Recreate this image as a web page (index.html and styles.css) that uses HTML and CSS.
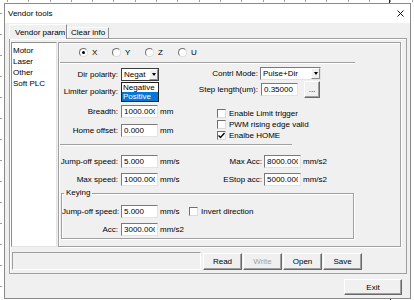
FILE: index.html
```html
<!DOCTYPE html>
<html lang="en">
<head>
    <meta charset="UTF-8">
    <meta name="viewport" content="width=device-width, initial-scale=1.0">
    <title>Vendor tools</title>
    <link rel="stylesheet" href="styles.css">
</head>
<body>

<div class="window">
    <div class="titlebar">
        <span class="title">Vendor tools</span>
        <svg class="close" width="7" height="7" viewBox="0 0 7 7">
            <path d="M0.5 0.5 L6.5 6.5 M6.5 0.5 L0.5 6.5" stroke="#111" stroke-width="1"/>
        </svg>
    </div>

    <div class="client">
        <div class="tabs">
            <div class="tab active">Vendor param</div>
            <div class="tab">Clear info</div>
        </div>

        <div class="tabpane">
            <div class="main">
                <ul class="listbox">
                    <li>Motor</li>
                    <li>Laser</li>
                    <li>Other</li>
                    <li>Soft PLC</li>
                </ul>

                <div class="panel">
                    <div class="axes">
                        <label class="radio on"><span class="dot"></span>X</label>
                        <label class="radio"><span class="dot"></span>Y</label>
                        <label class="radio"><span class="dot"></span>Z</label>
                        <label class="radio"><span class="dot"></span>U</label>
                    </div>
                    <div class="sep long"></div>

                    <div class="block1">
                        <div class="col-left">
                            <div class="field">
                                <span class="lbl">Dir polarity:</span>
                                <div class="combo open">
                                    <span>Negat</span><span class="drop"></span>
                                    <!-- list is dropped open over the next combo -->
                                    <ul class="droplist">
                                        <li>Negative</li>
                                        <li class="sel">Positive</li>
                                    </ul>
                                </div>
                            </div>
                            <div class="field">
                                <span class="lbl">Limiter polarity:</span>
                                <div class="combo"><span class="drop"></span></div>
                            </div>
                            <div class="field">
                                <span class="lbl">Breadth:</span>
                                <input class="txt" type="text" value="1000.000">
                                <span class="unit">mm</span>
                            </div>
                            <div class="field">
                                <span class="lbl">Home offset:</span>
                                <input class="txt" type="text" value="0.000">
                                <span class="unit">mm</span>
                            </div>
                        </div>

                        <div class="col-right">
                            <div class="field mode-row">
                                <span class="lbl">Contrl Mode:</span>
                                <div class="combo wide"><span>Pulse+Dir</span><span class="drop"></span></div>
                            </div>
                            <div class="field step-row">
                                <span class="lbl">Step length(um):</span>
                                <input class="txt" type="text" value="0.35000">
                                <button class="btn more">...</button>
                            </div>
                            <div class="checks">
                                <label class="check"><span class="box"></span>Enable Limit trigger</label>
                                <label class="check"><span class="box"></span>PWM rising edge valid</label>
                                <label class="check"><span class="box on">
                                    <svg width="7" height="7" viewBox="0 0 7 7"><path d="M0.5 3.5 L2.5 5.5 L6.5 1" fill="none" stroke="#000" stroke-width="1.3"/></svg>
                                </span>Enalbe HOME</label>
                            </div>
                        </div>
                    </div>

                    <div class="sep short"></div>

                    <div class="block2">
                        <div class="row">
                            <div class="field left-field">
                                <span class="lbl">Jump-off speed:</span>
                                <input class="txt" type="text" value="5.000">
                                <span class="unit">mm/s</span>
                            </div>
                            <div class="field right-field">
                                <span class="lbl">Max Acc:</span>
                                <input class="txt" type="text" value="8000.000">
                                <span class="unit">mm/s2</span>
                            </div>
                        </div>
                        <div class="row">
                            <div class="field left-field">
                                <span class="lbl">Max speed:</span>
                                <input class="txt" type="text" value="1000.000">
                                <span class="unit">mm/s</span>
                            </div>
                            <div class="field right-field">
                                <span class="lbl">EStop acc:</span>
                                <input class="txt" type="text" value="5000.000">
                                <span class="unit">mm/s2</span>
                            </div>
                        </div>
                    </div>

                    <fieldset class="group">
                        <legend>Keying</legend>
                        <div class="row">
                            <div class="field left-field">
                                <span class="lbl">Jump-off speed:</span>
                                <input class="txt" type="text" value="5.000">
                                <span class="unit">mm/s</span>
                            </div>
                            <label class="check"><span class="box"></span>Invert direction</label>
                        </div>
                        <div class="row">
                            <div class="field left-field">
                                <span class="lbl">Acc:</span>
                                <input class="txt" type="text" value="3000.000">
                                <span class="unit">mm/s2</span>
                            </div>
                        </div>
                    </fieldset>
                </div>
            </div>

            <div class="statusrow">
                <div class="status"></div>
                <button class="btn">Read</button>
                <button class="btn" disabled>Write</button>
                <button class="btn">Open</button>
                <button class="btn">Save</button>
            </div>
        </div>

        <div class="footer">
            <button class="btn exit">Exit</button>
        </div>
    </div>
</div>

</body>
</html>
```

FILE: styles.css
```css
body {
    margin: 0;
    height: 300px;
    overflow: hidden;
    font-family: "Liberation Sans", Arial, sans-serif;
    font-size: 8px;
    color: #000;
    background-color: #fff;
    /* ruler ticks round the dialog */
    background-image:
        linear-gradient(#222, #222),
        linear-gradient(#222, #222),
        repeating-linear-gradient(to right, #a0a0a0 0 1px, transparent 1px 21.3px),
        repeating-linear-gradient(to bottom, #a0a0a0 0 1px, transparent 1px 21px);
    background-size: 1px 3px, 1px 2px, 100% 2px, 2px 100%;
    background-position: 389px 0, 390px 298px, 7px 0, 0 13px;
    background-repeat: no-repeat;
}

.window {
    box-sizing: border-box;
    width: 407px;
    height: 296px;
    margin: 3px 0 0 4px;
    border: 1px solid #8a8a8a;
    background-color: #f0f0f0;
    display: flex;
    flex-direction: column;
}

.titlebar {
    height: 19px;
    flex-shrink: 0;
    background-color: #fff;
    display: flex;
    align-items: center;
    justify-content: space-between;
    padding: 0 6px 0 3px;
}

.client {
    flex: 1;
    display: flex;
    flex-direction: column;
}

/* tabs */
.tabs {
    display: flex;
    align-items: flex-end;
    height: 14px;
    margin: 1px 0 0 4px;
    position: relative;
    z-index: 1;
}

.tab {
    box-sizing: border-box;
    height: 11px;
    line-height: 10px;
    padding: 0 3px;
    border: 1px solid;
    border-bottom: 0;
    border-color: #fff #8c8c8c #8c8c8c #fff;
    white-space: nowrap;
}

.tab.active {
    width: 58px;
    height: 15px;
    margin-bottom: -1px;
    padding: 3px 0 0 5px;
    background-color: #f0f0f0;
}

.tabpane {
    box-sizing: border-box;
    height: 236px;
    margin: 0 3px 0 4px;
    padding: 3px 0 3px 1px;
    border: 1px solid #a0a0a0;
    box-shadow: inset 1px 1px #fff;
    display: flex;
    flex-direction: column;
}

.main {
    display: flex;
    gap: 1px;
    height: 205px;
}

.listbox {
    box-sizing: border-box;
    width: 46px;
    height: 205px;
    margin: 0;
    padding: 2px 1px;
    list-style: none;
    background-color: #fff;
    border: 1px solid;
    border-color: #8e8e8e #e3e3e3 #e3e3e3 #8e8e8e;
}

.listbox li {
    line-height: 11px;
}

.panel {
    box-sizing: border-box;
    width: 343px;
    height: 205px;
    border: 1px solid #a0a0a0;
    box-shadow: inset 1px 1px #fff, 1px 1px #fff;
}

/* axis radios */
.axes {
    display: flex;
    align-items: center;
    height: 10px;
    margin-top: 4px;
    padding-left: 20px;
}

.radio {
    width: 33px;
    display: flex;
    align-items: center;
    gap: 4px;
}

.radio .dot {
    box-sizing: border-box;
    width: 9px;
    height: 9px;
    border-radius: 50%;
    border: 1px solid;
    border-color: #6f6f6f #dcdcdc #dcdcdc #6f6f6f;
    background-color: #fff;
    position: relative;
}

.radio.on .dot::after {
    content: "";
    position: absolute;
    left: 2px;
    top: 2px;
    width: 3px;
    height: 3px;
    border-radius: 50%;
    background-color: #000;
}

.sep {
    border-top: 1px solid #a0a0a0;
    border-bottom: 1px solid #fff;
    margin-left: 1px;
}

.sep.long {
    width: 295px;
    margin-top: 5px;
}

.sep.short {
    width: 232px;
}

/* fields */
.field {
    display: flex;
    align-items: center;
    height: 13px;
    flex-shrink: 0;
}

.lbl {
    width: 59px;
    margin-right: 3px;
    text-align: right;
    white-space: nowrap;
}

.txt {
    box-sizing: border-box;
    width: 37px;
    height: 13px;
    margin: 0;
    padding: 0 2px;
    font: inherit;
    color: #000;
    background-color: #fff;
    border: 1px solid;
    border-color: #7a7a7a #e3e3e3 #e3e3e3 #7a7a7a;
    outline: none;
}

.unit {
    margin-left: 2px;
    white-space: nowrap;
}

.combo {
    box-sizing: border-box;
    width: 38px;
    height: 13px;
    padding-left: 2px;
    background-color: #fff;
    border: 1px solid;
    border-color: #7a7a7a #e3e3e3 #e3e3e3 #7a7a7a;
    display: flex;
    align-items: center;
    justify-content: space-between;
    position: relative;
    white-space: nowrap;
}

.combo.open {
    border-color: #3c3c3c;
}

.combo.wide {
    width: 61px;
}

.combo .drop {
    box-sizing: border-box;
    width: 9px;
    height: 11px;
    margin-left: auto;
    background-color: #f0f0f0;
    border: 1px solid;
    border-color: #fff #8c8c8c #8c8c8c #fff;
    display: flex;
    align-items: center;
    justify-content: center;
}

.combo .drop::after {
    content: "";
    border-left: 2.5px solid transparent;
    border-right: 2.5px solid transparent;
    border-top: 3px solid #000;
}

.droplist {
    position: absolute;
    left: -1px;
    top: 13px;
    z-index: 2;
    box-sizing: border-box;
    width: 38px;
    margin: 0;
    padding: 0;
    list-style: none;
    background-color: #fff;
    border: 1px solid #1e1e1e;
}

.droplist li {
    height: 9px;
    line-height: 9px;
    padding-left: 1px;
}

.droplist li.sel {
    background-color: #0078d7;
    color: #fff;
}

.block1 {
    display: flex;
    height: 80px;
}

.col-left {
    width: 138px;
    display: flex;
    flex-direction: column;
}

.col-left .field:nth-child(1) { margin-top: 4px; }
.col-left .field:nth-child(2) { margin-top: 4px; }
.col-left .field:nth-child(3) { margin-top: 7px; }
.col-left .field:nth-child(4) { margin-top: 6px; }

.col-right {
    flex: 1;
    display: flex;
    flex-direction: column;
}

.col-right .lbl {
    width: 61px;
    margin-right: 2px;
}

.mode-row {
    margin-top: 3px;
}

.step-row {
    height: 17px;
    margin-top: 1px;
}

.step-row .txt {
    margin-left: 1px;
}

.checks {
    margin-top: 10px;
    padding-left: 20px;
}

.check {
    display: flex;
    align-items: center;
    gap: 3px;
    height: 11px;
    white-space: nowrap;
}

.check .box {
    box-sizing: border-box;
    width: 9px;
    height: 9px;
    background-color: #fff;
    border: 1px solid;
    border-color: #6f6f6f #dcdcdc #dcdcdc #6f6f6f;
    display: flex;
    align-items: center;
    justify-content: center;
}

.block2 {
    margin-top: 9px;
}

.row {
    display: flex;
    align-items: center;
    height: 13px;
}

.row + .row {
    margin-top: 5px;
}

.left-field {
    width: 142px;
}

.right-field .lbl {
    width: 61px;
    margin-right: 2px;
}

/* keying group */
.group {
    box-sizing: border-box;
    width: 293px;
    margin: 2px 0 0 2px;
    padding: 7px 0 2px 0;
    border: 1px solid #a0a0a0;
    box-shadow: inset 1px 1px #fff, 1px 1px #fff;
}

.group legend {
    margin-left: 2px;
    padding: 0 2px;
    line-height: 10px;
}

.group .lbl {
    width: 56px;
}

.group .left-field {
    width: 127px;
}

/* bottom rows */
.statusrow {
    display: flex;
    align-items: flex-start;
    height: 18px;
    margin-top: 5px;
    padding-left: 1px;
}

.status {
    box-sizing: border-box;
    width: 189px;
    height: 18px;
    margin-right: 1px;
    border: 1px solid;
    border-color: #a0a0a0 #fff #fff #a0a0a0;
}

.btn {
    box-sizing: border-box;
    width: 39px;
    height: 17px;
    margin: 1px 0 0 1px;
    padding: 0;
    font: inherit;
    color: #000;
    background-color: #f0f0f0;
    border: 1px solid;
    border-color: #fff #696969 #696969 #fff;
    box-shadow: inset -1px -1px #a0a0a0;
    cursor: pointer;
}

.btn:disabled {
    color: #a0a0a0;
}

.btn.more {
    width: 16px;
    margin: 0 0 0 6px;
}

.footer {
    display: flex;
    justify-content: flex-end;
    padding: 5px 8px 0 0;
}

.btn.exit {
    width: 58px;
    height: 16px;
    margin: 0;
}
```
